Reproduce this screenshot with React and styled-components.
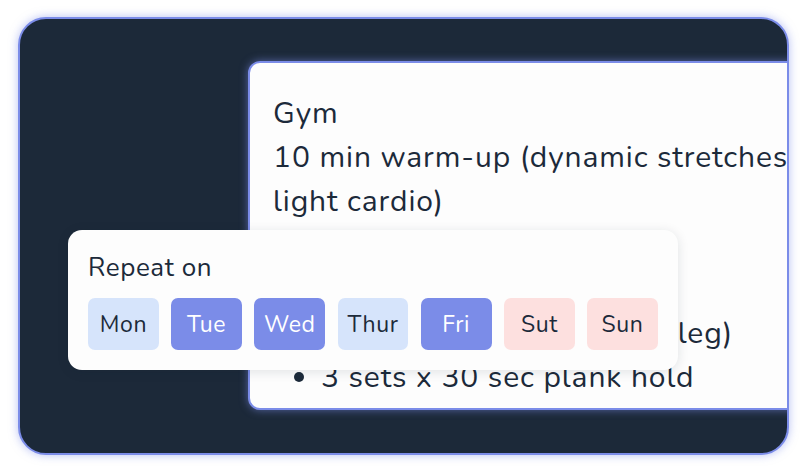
import styled, { createGlobalStyle } from "styled-components";

const Global = createGlobalStyle`
    body {
        margin: 0;
        background: #ffffff;
        font-family: "Nunito", "Open Sans", "Noto Sans", sans-serif;
    }
`

const days = [
    { label: "Mon", kind: "off" },
    { label: "Tue", kind: "on" },
    { label: "Wed", kind: "on" },
    { label: "Thur", kind: "off" },
    { label: "Fri", kind: "on" },
    { label: "Sut", kind: "weekend" },
    { label: "Sun", kind: "weekend" },
]

function App(){
    return(
        <>
        <Global/>
        <Page>
            <Board>
                <Note>
                    <Line>Gym</Line>
                    <Line>10 min warm-up (dynamic stretches +</Line>
                    <Line>light cardio)</Line>
                    <Line>Strength circuit:</Line>
                    <List>
                        <li>3 sets x 12 squats</li>
                        <li>3 sets x 10 lunges (each leg)</li>
                        <li>3 sets x 30 sec plank hold</li>
                    </List>
                </Note>
                <Popup>
                    <PopupTitle>Repeat on</PopupTitle>
                    <Days>
                        {days.map(d => (
                            <Day key={d.label} $kind={d.kind}>{d.label}</Day>
                        ))}
                    </Days>
                </Popup>
            </Board>
        </Page>
        </>
    )
}

const Page=styled.div`
    width: 806px;
    height: 472px;
    padding: 17px 0 0 18px;
    box-sizing: border-box;
`
const Board=styled.div`
    position: relative;
    width: 771px;
    height: 438px;
    box-sizing: border-box;
    background-color: #1c2939;
    border: 2px solid #7b8ce8;
    border-radius: 28px;
    box-shadow: 0 0 10px rgba(123, 140, 232, 0.55);
    overflow: hidden;
    padding: 42px 0 0 228px;
`
const Note=styled.div`
    width: 640px;
    height: 349px;
    box-sizing: border-box;
    background-color: #fdfdfd;
    border: 2px solid #7b8ce8;
    border-radius: 12px;
    box-shadow: 0 0 8px rgba(123, 140, 232, 0.6);
    padding: 29px 0 0 23px;
    color: #1c2a3a;
    font-size: 30px;
    letter-spacing: 0.9px;
    line-height: 44px;
    white-space: nowrap;
`
const Line=styled.div``
const List=styled.ul`
    margin: 0;
    padding-left: 48px;
`
const Popup=styled.div`
    position: absolute;
    left: 48px;
    top: 211px;
    width: 610px;
    box-sizing: border-box;
    padding: 22px 20px 20px 20px;
    background-color: #fdfdfd;
    border-radius: 14px;
    box-shadow: 0 2px 12px rgba(20, 30, 50, 0.12);
    color: #1c2a3a;
`
const PopupTitle=styled.div`
    font-size: 26px;
    letter-spacing: 0.6px;
    line-height: 32px;
    margin-bottom: 14px;
`
const Days=styled.div`
    display: flex;
    gap: 12.3px;
`
const colors = {
    on: ["#7b8ce8", "#ffffff"],
    off: ["#d6e4fb", "#1c2a3a"],
    weekend: ["#fde0df", "#1c2a3a"],
}
const Day=styled.div`
    width: 71px;
    height: 52px;
    border-radius: 7px;
    display: flex;
    align-items: center;
    justify-content: center;
    font-size: 23px;
    letter-spacing: 0.6px;
    background-color: ${p => colors[p.$kind][0]};
    color: ${p => colors[p.$kind][1]};
`

export default App
